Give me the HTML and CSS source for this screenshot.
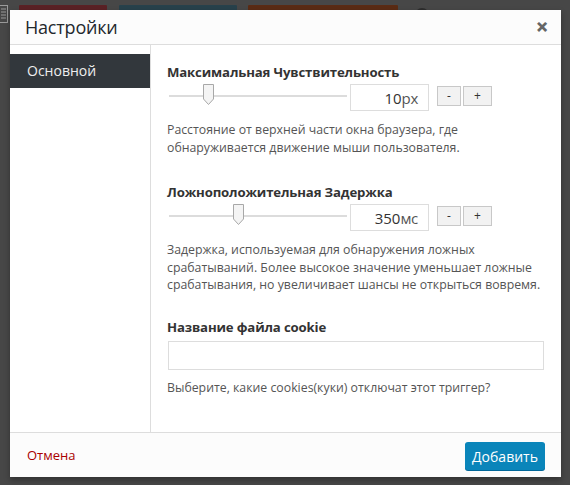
FILE: index.html
```html
<!DOCTYPE html>
<html lang="ru">
<head>
<meta charset="utf-8">
<title>Настройки</title>
<link rel="stylesheet" href="styles.css">
</head>
<body>
<div class="backdrop">
  <div class="bg-icon">
    <svg width="9" height="18" viewBox="0 0 9 18"><rect x="0.5" y="0.5" width="8" height="17" fill="none" stroke="#9a9a9a"/><path d="M2 4h5M2 7h5M2 10h5M2 13h5" stroke="#9a9a9a"/></svg>
  </div>
  <div class="bg-bars">
    <span class="bar bar-red"></span>
    <span class="bar bar-teal"></span>
    <span class="bar bar-brown"></span>
    <span class="bar-dot"></span>
  </div>
</div>

<div class="modal">
  <header class="modal-header">
    <h1 class="modal-title">Настройки</h1>
    <span class="modal-close">&#x2715;</span>
  </header>
  <div class="modal-body">
    <nav class="sidebar">
      <div class="side-item active">Основной</div>
    </nav>
    <main class="content">
      <section class="field first">
        <h2 class="field-title">Максимальная Чувствительность</h2>
        <div class="slider-row">
          <div class="track"><span class="handle" style="left:34px"><svg width="11" height="21" viewBox="0 0 11 21"><path d="M0.5 0.5H10.5V15L5.5 20.5L0.5 15Z" fill="#f4f4f4" stroke="#a8a8a8"/></svg></span></div>
          <div class="value-box"><span class="num">10</span><span class="unit">px</span></div>
          <div class="steppers"><button class="step">-</button><button class="step plus">+</button></div>
        </div>
        <p class="desc">Расстояние от верхней части окна браузера, где обнаруживается движение мыши пользователя.</p>
      </section>
      <section class="field second">
        <h2 class="field-title">Ложноположительная Задержка</h2>
        <div class="slider-row">
          <div class="track"><span class="handle" style="left:64px"><svg width="11" height="21" viewBox="0 0 11 21"><path d="M0.5 0.5H10.5V15L5.5 20.5L0.5 15Z" fill="#f4f4f4" stroke="#a8a8a8"/></svg></span></div>
          <div class="value-box"><span class="num">350</span><span class="unit">мс</span></div>
          <div class="steppers"><button class="step">-</button><button class="step plus">+</button></div>
        </div>
        <p class="desc">Задержка, используемая для обнаружения ложных срабатываний. Более высокое значение уменьшает ложные срабатывания, но увеличивает шансы не открыться вовремя.</p>
      </section>
      <section class="field">
        <h2 class="field-title">Название файла cookie</h2>
        <div class="text-input"></div>
        <p class="desc short">Выберите, какие cookies(куки) отключат этот триггер?</p>
      </section>
    </main>
  </div>
  <footer class="modal-footer">
    <a class="cancel">Отмена</a>
    <button class="primary">Добавить</button>
  </footer>
</div>
</body>
</html>
```

FILE: styles.css
```css
html, body {
  margin: 0;
  padding: 0;
}
body {
  width: 570px;
  height: 485px;
  background: #474747;
  font-family: "Open Sans", "Noto Sans", "DejaVu Sans", sans-serif;
  overflow: hidden;
  position: relative;
}
.backdrop {
  display: flex;
  align-items: flex-start;
  gap: 11px;
  padding-top: 4px;
}
.bg-icon {
  display: flex;
  margin-left: -1px;
  padding-top: 1px;
}
.bg-bars {
  display: flex;
  align-items: flex-start;
  gap: 12px;
  padding-top: 1px;
}
.bar {
  display: block;
  height: 6px;
  border-radius: 1px;
}
.bar-red { width: 88px; background: #5a2125; }
.bar-teal { width: 118px; background: #27414b; }
.bar-brown { width: 150px; background: #5a2b14; margin-left: -1px; }
.bar-dot {
  display: block;
  width: 14px;
  height: 8px;
  margin-left: 5px;
  margin-top: 3px;
  border-radius: 7px 7px 0 0;
  background: #2d2d2d;
}

.modal {
  position: absolute;
  left: 10px;
  top: 10px;
  width: 551px;
  height: 467px;
  background: #fff;
  display: flex;
  flex-direction: column;
  box-shadow: 0 3px 6px rgba(0,0,0,.3);
}
.modal-header {
  height: 34px;
  border-bottom: 1px solid #dddddd;
  background: #fcfcfc;
  display: flex;
  align-items: center;
  justify-content: space-between;
  padding: 0 13px 0 15px;
  flex: none;
}
.modal-title {
  margin: 0;
  font-size: 18px;
  font-weight: 400;
  color: #23282d;
  letter-spacing: -0.2px;
}
.modal-close {
  font-size: 14px;
  font-weight: 700;
  color: #666;
  line-height: 1;
  -webkit-text-stroke: 1.3px #666;
}
.modal-body {
  flex: 1;
  display: flex;
  min-height: 0;
}
.sidebar {
  width: 140px;
  border-right: 1px solid #dddddd;
  padding-top: 9px;
  flex: none;
}
.side-item {
  height: 34px;
  line-height: 34px;
  padding-left: 17px;
  font-size: 14px;
  color: #eee;
}
.side-item.active {
  background: #32373c;
}
.content {
  flex: 1;
  padding: 17px 17px 0 16px;
  color: #444;
}
.field.first {
  margin-bottom: 26px;
}
.field.second {
  margin-bottom: 23px;
}
.field-title {
  margin: 0;
  font-size: 13.2px;
  font-weight: 700;
  color: #333;
  line-height: 20px;
  letter-spacing: -0.15px;
}
.slider-row {
  display: flex;
  align-items: center;
  margin-top: 2px;
  height: 27px;
}
.track {
  position: relative;
  width: 178px;
  height: 2px;
  background: #dcdcdc;
  margin-left: 2px;
  margin-top: -3px;
}
.handle {
  position: absolute;
  top: -11px;
  display: flex;
}
.value-box {
  margin-left: 3px;
  width: 67px;
  height: 25px;
  border: 1px solid #dddddd;
  display: flex;
  align-items: center;
  justify-content: flex-end;
  padding-right: 10px;
  font-size: 15px;
  color: #333;
}
.unit {
  color: #555;
  letter-spacing: -0.3px;
}
.steppers {
  display: flex;
  gap: 2px;
  margin-left: 8px;
  margin-top: -4px;
}
.step {
  width: 24px;
  height: 20px;
  padding: 0;
  border: 1px solid #c8c8c8;
  background: #f2f2f2;
  font-family: inherit;
  font-size: 12px;
  color: #333;
  line-height: 1;
}
.step.plus { width: 29px; }
.desc {
  margin: 10px 0 0 0;
  font-size: 12.3px;
  line-height: 17.5px;
  color: #555;
  width: 380px;
}
.desc.short { margin-top: 9px; }
.text-input {
  margin-top: 4px;
  height: 27px;
  width: 374px;
  border: 1px solid #dddddd;
  margin-left: 1px;
}
.modal-footer {
  height: 44px;
  border-top: 1px solid #dddddd;
  background: #fcfcfc;
  display: flex;
  align-items: center;
  justify-content: space-between;
  padding: 0 16px 0 17px;
  flex: none;
}
.cancel {
  font-size: 13px;
  color: #a00;
  margin-top: -1px;
}
.primary {
  width: 80px;
  height: 28px;
  border: none;
  border-radius: 3px;
  background: #0a85ba;
  color: #fff;
  font-family: inherit;
  font-size: 14px;
  padding: 0;
  margin-top: 2px;
  box-shadow: 0 1px 0 #006799;
}
```
